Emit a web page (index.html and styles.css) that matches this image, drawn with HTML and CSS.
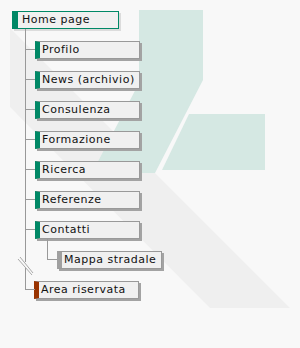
FILE: index.html
```html
<!DOCTYPE html>
<html lang="it">
<head>
  <meta charset="UTF-8" />
  <title>Mappa del sito</title>
  <link rel="stylesheet" href="styles.css">
</head>
<body>
  <div class="pagina">
    <svg class="logo" width="300" height="348" viewBox="0 0 300 348">
      <polygon points="10,28 290,308 210,308 10,107" fill="#efefef" />
      <polygon points="139,10 203,10 203,80 155,173 92,173 139,83" fill="#d5e8e3" />
      <polygon points="189,114 265,114 265,170 162,170" fill="#d5e8e3" />
    </svg>

    <div class="mappa">
      <a class="voce home" href="#">Home page</a>
      <ul class="albero">
        <li><a class="voce" href="#">Profilo</a></li>
        <li><a class="voce" href="#">News (archivio)</a></li>
        <li><a class="voce" href="#">Consulenza</a></li>
        <li><a class="voce" href="#">Formazione</a></li>
        <li><a class="voce" href="#">Ricerca</a></li>
        <li><a class="voce" href="#">Referenze</a></li>
        <li>
          <a class="voce" href="#">Contatti</a>
          <ul class="albero sotto">
            <li><a class="voce grigia" href="#">Mappa stradale</a></li>
          </ul>
        </li>
        <li>
          <span class="interruzione">
            <svg width="17" height="20" viewBox="0 0 17 20">
              <rect x="7" y="6" width="3" height="6" fill="#f8f8f8" />
              <line x1="1" y1="3" x2="15" y2="19" stroke="#aaa" />
              <line x1="3" y1="1" x2="16" y2="17" stroke="#aaa" />
            </svg>
          </span>
          <a class="voce riservata" href="#">Area riservata</a>
        </li>
      </ul>
    </div>
  </div>
</body>
</html>
```

FILE: styles.css
```css
body {
  margin: 0;
  background-color: #f8f8f8;
  font-family: "DejaVu Sans", Verdana, sans-serif;
  font-size: 11px;
  color: #111;
}

.pagina {
  position: relative;
  width: 300px;
  height: 348px;
  overflow: hidden;
}

.logo {
  position: absolute;
  left: 0;
  top: 0;
}

.mappa {
  position: relative;
  padding: 11px 0 0 12px;
}

/* caselle */
.voce {
  display: block;
  box-sizing: border-box;
  width: 105px;
  height: 18px;
  line-height: 16px;
  padding-left: 2px;
  border: 1px solid #999;
  border-left: 5px solid #008866;
  background-color: #f0f0f0;
  box-shadow: 2px 2px 0 #a3a3a3;
  color: #111;
  text-decoration: none;
  letter-spacing: 0.5px;
  white-space: nowrap;
}

.home {
  width: 107px;
  padding-left: 4px;
  border: 1px solid #008866;
  border-left-width: 6px;
  box-shadow: 2px 2px 0 #dcdcdc;
}

.grigia {
  border-left-color: #a0a0a0;
}

.riservata {
  margin-left: -1px;
  border-left-color: #993300;
}

/* linee dell'albero */
.albero {
  list-style: none;
  margin: 0 0 0 13px;
  padding: 0;
}

.albero li {
  position: relative;
  padding: 12px 0 0 10px;
}

.albero li::before {
  content: '';
  position: absolute;
  left: 0;
  top: 0;
  bottom: 0;
  border-left: 1px solid #999;
}

.albero li:last-child::before {
  bottom: auto;
  height: 21px;
}

.albero li::after {
  content: '';
  position: absolute;
  left: 1px;
  top: 20px;
  width: 9px;
  border-top: 1px solid #999;
}

.sotto {
  margin-left: 12px;
}

.interruzione {
  position: absolute;
  left: -8px;
  top: -13px;
  line-height: 0;
}
```
